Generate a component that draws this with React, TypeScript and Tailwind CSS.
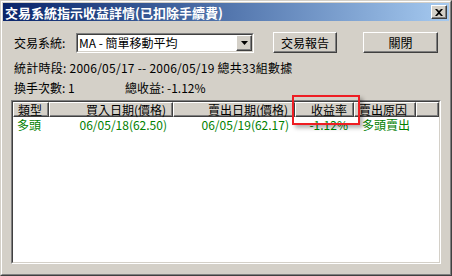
import React from 'react';

const font = { fontFamily: '"Noto Sans CJK TC", "Liberation Sans", sans-serif' };

const raised =
  'border border-t-white border-l-white border-b-[#404040] border-r-[#404040] shadow-[inset_-1px_-1px_0_#808080]';

const HeaderCell: React.FC<{ w: string; align?: 'left' | 'right'; children?: React.ReactNode }> = ({ w, align = 'left', children }) => (
  <div
    className={`${w} h-[15px] ${raised} flex items-center ${align === 'right' ? 'justify-end pr-[6px]' : 'justify-start pl-[4px]'} text-[12px] leading-none text-black`}
  >
    {children}
  </div>
);

const Cell: React.FC<{ w: string; className?: string; children?: React.ReactNode }> = ({ w, className = '', children }) => (
  <div className={`${w} ${className}`}>{children}</div>
);

export default function App() {
  return (
    <div className="w-[452px] h-[276px] bg-[#d4d0c8] border border-t-[#d4d0c8] border-l-[#d4d0c8] border-b-[#404040] border-r-[#404040] relative" style={font}>
      <div className="h-full border border-t-white border-l-white border-b-[#808080] border-r-[#808080] p-px flex flex-col">
        {/* title bar */}
        <div className="h-[18px] bg-gradient-to-r from-[#0a246a] to-[#a6caf0] flex items-center justify-between pl-[2px] pr-[2px]">
          <span className="text-white font-bold text-[13px] leading-none">交易系統指示收益詳情(已扣除手續費)</span>
          <div className={`w-[16px] h-[14px] bg-[#d4d0c8] ${raised} flex items-center justify-center`}>
            <svg width="8" height="7" viewBox="0 0 8 7">
              <path d="M0 0h2l2 2 2-2h2L5 3.5 8 7H6L4 5 2 7H0l3-3.5z" fill="#000" />
            </svg>
          </div>
        </div>

        {/* row 1 */}
        <div className="mt-[11px] h-[21px] flex items-center pl-[11px] text-[12px] text-black">
          <span className="w-[62px]">交易系統:</span>
          <div className="w-[178px] h-[20px] bg-white border border-t-[#808080] border-l-[#808080] border-b-white border-r-white">
            <div className="h-full border border-t-[#404040] border-l-[#404040] border-b-[#d4d0c8] border-r-[#d4d0c8] flex items-center">
              <span className="flex-1 pl-[1px] leading-none">MA - 簡單移動平均</span>
              <div className={`w-[16px] h-full bg-[#d4d0c8] ${raised} flex items-center justify-center`}>
                <svg width="7" height="4" viewBox="0 0 7 4">
                  <path d="M0 0h7L3.5 4z" fill="#000" />
                </svg>
              </div>
            </div>
          </div>
          <div className={`ml-[19px] w-[64px] h-[21px] bg-[#d4d0c8] ${raised} flex items-center justify-center leading-none`}>交易報告</div>
          <div className={`ml-[26px] w-[75px] h-[21px] bg-[#d4d0c8] ${raised} flex items-center justify-center leading-none`}>關閉</div>
        </div>

        {/* row 2 */}
        <div className="mt-[5px] h-[20px] flex items-center pl-[11px] text-[12px] text-black leading-none tracking-[0.25px]">
          統計時段: 2006/05/17 -- 2006/05/19 總共33組數據
        </div>

        {/* row 3 */}
        <div className="h-[20px] flex items-center pl-[11px] text-[12px] text-black leading-none">
          <span className="w-[111px]">換手次數: 1</span>
          <span>總收益: -1.12%</span>
        </div>

        {/* list */}
        <div className="mt-[2px] ml-[8px] w-[430px] h-[164px] border border-t-[#808080] border-l-[#808080] border-b-white border-r-white">
          <div className="h-full border border-t-[#404040] border-l-[#404040] border-b-[#d4d0c8] border-r-[#d4d0c8] bg-white flex flex-col">
            <div className="flex bg-[#d4d0c8]">
              <HeaderCell w="w-[36px]">類型</HeaderCell>
              <HeaderCell w="w-[124px]" align="right">買入日期(價格)</HeaderCell>
              <HeaderCell w="w-[122px]" align="right">賣出日期(價格)</HeaderCell>
              <HeaderCell w="w-[59px]" align="right">收益率</HeaderCell>
              <HeaderCell w="w-[62px]">賣出原因</HeaderCell>
              <HeaderCell w="flex-1" />
            </div>
            <div className="flex h-[15px] items-center text-[12px] leading-none text-[#008000]">
              <Cell w="w-[36px]" className="pl-[4px]">多頭</Cell>
              <Cell w="w-[124px]" className="text-right pr-[6px]">06/05/18(62.50)</Cell>
              <Cell w="w-[122px]" className="text-right pr-[6px]">06/05/19(62.17)</Cell>
              <Cell w="w-[59px]" className="text-right pr-[6px]">-1.12%</Cell>
              <Cell w="w-[62px]" className="pl-[8px]">多頭賣出</Cell>
            </div>
          </div>
        </div>
      </div>

      {/* highlight annotation */}
      <div className="absolute left-[291px] top-[94px] w-[68px] h-[30px] border-2 border-[#ee1d23] shadow-[3px_3px_4px_rgba(0,0,0,0.3)]" />
    </div>
  );
}
